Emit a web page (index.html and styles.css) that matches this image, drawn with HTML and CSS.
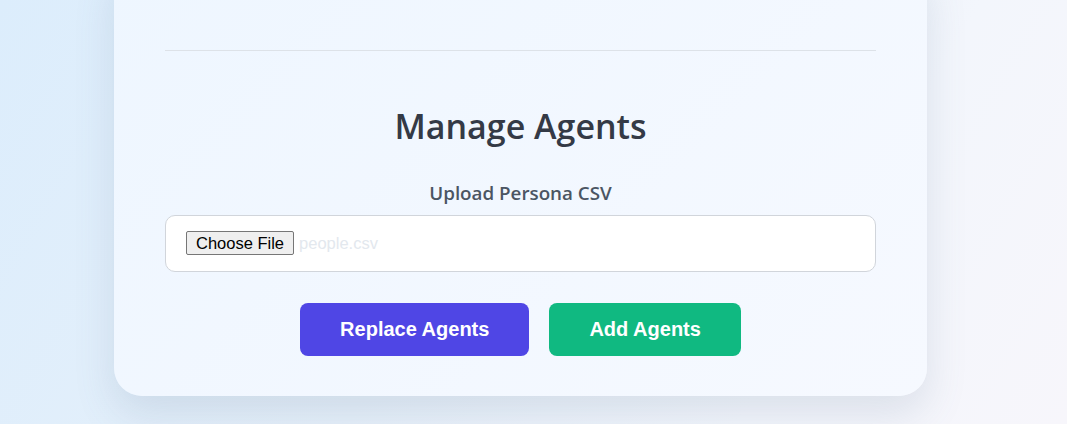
FILE: index.html
```html
<!DOCTYPE html>
<html lang="en">
<head>
    <meta charset="UTF-8">
    <meta name="viewport" content="width=device-width, initial-scale=1.0">
    <title>Manage Agents</title>
    <link rel="stylesheet" href="styles.css">
</head>
<body>
    <div class="card">
        <hr class="divider">

        <div class="agents-section">
            <h2>Manage Agents</h2>

            <label class="field-label" for="persona-file">Upload Persona CSV</label>
            <div class="file-field">
                <button type="button" class="file-btn" id="persona-file">Choose File</button>
                <span class="file-name">people.csv</span>
            </div>

            <div class="actions">
                <button type="button" class="btn btn-replace">Replace Agents</button>
                <button type="button" class="btn btn-add">Add Agents</button>
            </div>
        </div>
    </div>
</body>
</html>
```

FILE: styles.css
```css
html, body {
    height: 100%;
}

body {
    margin: 0;
    padding: 0;
    overflow: hidden;
    font-family: 'Segoe UI', 'Open Sans', sans-serif;
    background: linear-gradient(120deg, #dcedfc 0%, #e6f0fa 45%, #f3f6fc 75%, #f7f6fb 100%);
}

.card {
    width: 813px;
    box-sizing: border-box;
    margin: -40px 0 0 114px;
    padding: 90px 51px 40px;
    border-radius: 28px;
    background: linear-gradient(135deg, #eef6ff, #f6f9ff);
    box-shadow: 0 18px 40px rgba(90, 110, 140, 0.16);
}

.divider {
    border: none;
    border-top: 1px solid #dde2e8;
    margin: 0;
}

.agents-section {
    display: flex;
    flex-direction: column;
    align-items: center;
    padding-top: 51px;
}

.agents-section h2 {
    margin: 0 0 31px;
    font-size: 34px;
    font-weight: 600;
    line-height: 48px;
    color: #343a46;
}

.field-label {
    font-size: 18.8px;
    font-weight: 600;
    line-height: 24px;
    color: #4b5563;
    margin-bottom: 10px;
}

.file-field {
    align-self: stretch;
    display: flex;
    align-items: center;
    padding: 15px 20px 16px;
    border: 1px solid #d1d5db;
    border-radius: 10px;
    background: #fff;
}

.file-btn {
    font-family: Arial, 'Liberation Sans', sans-serif;
    font-size: 16.5px;
    line-height: 18px;
    padding: 2px 9px;
    color: #000;
    background: #efefef;
    border: 1px solid #767676;
    border-radius: 2px;
}

.file-name {
    margin-left: 5px;
    font-family: Arial, 'Liberation Sans', sans-serif;
    font-size: 16.5px;
    color: #e3e8ee;
}

.actions {
    display: flex;
    gap: 20px;
    margin-top: 31px;
}

.btn {
    padding: 15px 40px;
    border: none;
    border-radius: 8px;
    font-family: Arial, 'Liberation Sans', sans-serif;
    font-size: 20px;
    font-weight: 700;
    line-height: 23px;
    color: #fff;
    cursor: pointer;
}

.btn-replace {
    background-color: #4f46e5;
}

.btn-add {
    background-color: #10b981;
}
```
